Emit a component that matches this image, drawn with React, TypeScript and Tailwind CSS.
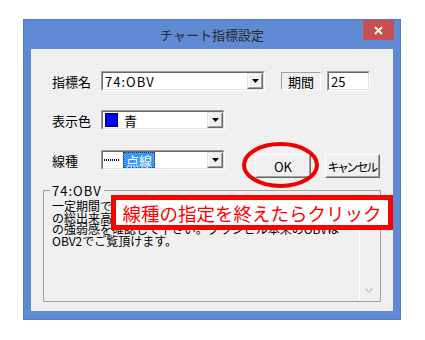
import React from 'react';

const jp = "font-['Noto_Sans_CJK_JP','Noto_Sans_CJK_SC',sans-serif]";

// classic sunken / raised edges
const sunkenOuter = 'border border-t-[#a0a0a0] border-l-[#a0a0a0] border-b-white border-r-white';
const sunkenInner = 'border border-t-[#696969] border-l-[#696969] border-b-[#e3e3e3] border-r-[#e3e3e3]';
const raisedOuter = 'border border-t-[#e3e3e3] border-l-[#e3e3e3] border-b-[#696969] border-r-[#696969]';
const raisedInner = 'border border-t-white border-l-white border-b-[#a0a0a0] border-r-[#a0a0a0]';

const DropArrow = () => (
  <div className={`w-[16px] h-full ${raisedOuter}`}>
    <div className={`w-full h-full ${raisedInner} bg-[#f0f0f0] flex items-center justify-center`}>
      <svg width="7" height="4" viewBox="0 0 7 4">
        <path d="M0 0h7L3.5 4z" fill="#000" />
      </svg>
    </div>
  </div>
);

const Combo: React.FC<{ className: string; children: React.ReactNode }> = ({ className, children }) => (
  <div className={`h-[20px] ${sunkenOuter} ${className}`}>
    <div className={`h-full ${sunkenInner} bg-white flex`}>
      <div className="flex-1 flex items-center min-w-0">{children}</div>
      <DropArrow />
    </div>
  </div>
);

const Button: React.FC<{ className: string; children: React.ReactNode }> = ({ className, children }) => (
  <div className={`h-[24px] border border-t-white border-l-white border-b-[#696969] border-r-[#696969] ${className}`}>
    <div className="w-full h-full border border-t-[#f0f0f0] border-l-[#f0f0f0] border-b-[#a0a0a0] border-r-[#a0a0a0] bg-[#f0f0f0] flex items-center justify-center text-[13px] leading-[13px] text-black">
      {children}
    </div>
  </div>
);

export default function App() {
  return (
    <div className={`relative w-[425px] h-[340px] bg-white pt-[19px] pl-[23px] ${jp}`}>
      {/* window */}
      <div className="w-[378px] h-[301px] bg-[#5f8ad4] border border-[#5479c2] flex flex-col">
        <div className="h-[29px] grid grid-cols-[1fr_auto_1fr]">
          <div />
          <div className="flex items-center text-[13px] text-[#2b2b2b] pt-[1px]">チャート指標設定</div>
          <div className="flex justify-end items-start pr-[6px]">
            <div className="w-[31px] h-[20px] bg-[#c75050] flex items-center justify-center">
              <svg width="9" height="9" viewBox="0 0 9 9">
                <path d="M1 1L8 8M8 1L1 8" stroke="#fff" strokeWidth="1.8" />
              </svg>
            </div>
          </div>
        </div>

        <div className="mx-[7px] h-[262px] bg-[#f0f0f0] px-[12px] pt-[22px] text-[13px] text-black">
          {/* row 1 */}
          <div className="flex items-center h-[20px] pl-[9px]">
            <div className="w-[49px] leading-[13px]">指標名</div>
            <Combo className="w-[164px]">
              <span className="pl-[2px] tracking-[1px] leading-[13px]">74:OBV</span>
            </Combo>
            <div className="ml-[16px] w-[40px] h-[18px] border border-t-[#a0a0a0] border-l-[#a0a0a0] border-b-white border-r-white flex items-center justify-center leading-[13px]">
              期間
            </div>
            <div className={`ml-[6px] w-[43px] h-[20px] ${sunkenOuter}`}>
              <div className={`w-full h-full ${sunkenInner} bg-white flex items-center pl-[2px] leading-[13px]`}>25</div>
            </div>
          </div>

          {/* row 2 */}
          <div className="flex items-center h-[20px] pl-[9px] mt-[19px]">
            <div className="w-[49px] leading-[13px]">表示色</div>
            <Combo className="w-[124px]">
              <div className="ml-[2px] w-[13px] h-[14px] bg-[#0000ff] border border-[#00004a]" />
              <span className="ml-[6px] leading-[13px]">青</span>
            </Combo>
          </div>

          {/* row 3 */}
          <div className="flex items-start pl-[9px] mt-[20px]">
            <div className="w-[49px] h-[20px] flex items-center leading-[13px]">線種</div>
            <Combo className="w-[124px]">
              <div className="ml-[1px] w-[15px] h-[2px] bg-[repeating-linear-gradient(90deg,#00005a_0_1px,transparent_1px_2px)]" />
              <span className="ml-[4px] h-[16px] px-[2px] bg-[#3399ff] text-white border border-dotted border-[#333] flex items-center leading-[13px]">
                点線
              </span>
            </Combo>
            <Button className="ml-[30px] mt-[4px] w-[56px]">OK</Button>
            <Button className="ml-[14px] mt-[4px] w-[55px]">
              <span className="text-[12px] tracking-[-1px] [font-feature-settings:'palt']">キャンセル</span>
            </Button>
          </div>

          {/* group box */}
          <fieldset className="mt-[6px] h-[118px] border border-[#a0a0a0]">
            <legend className="ml-[6px] px-[2px] leading-[13px] tracking-[1px]">74:OBV</legend>
            <div className="flex h-[100px] ml-[4px] mr-[3px] mt-[3px]">
              <div className="flex-1 pl-[4px] text-[12px] leading-[11.5px] text-black">
                <div>一定期間での上昇日の出来高と下落日の出来高</div>
                <div>の総出来高を比較し、売り買いのエネルギー</div>
                <div>の強弱感を確認して下さい。グランビル本来のOBVは</div>
                <div>OBV2でご覧頂けます。</div>
              </div>
              <div className="w-[18px] border-l border-white flex flex-col justify-end items-center pb-[7px]">
                <svg width="8" height="5" viewBox="0 0 8 5">
                  <path d="M0.5 0.5L4 4L7.5 0.5" stroke="#c4c4c4" strokeWidth="1.3" fill="none" />
                </svg>
              </div>
            </div>
          </fieldset>
        </div>
      </div>

      {/* red ellipse around OK */}
      <svg className="absolute left-[240px] top-[140px]" width="82" height="50" viewBox="0 0 82 50">
        <ellipse cx="40.5" cy="25" rx="36.5" ry="21" fill="none" stroke="#ee0000" strokeWidth="4" />
      </svg>

      {/* callout */}
      <div className="absolute left-[111px] top-[195px] w-[282px] h-[35px] bg-white border-[5px] border-[#ff0000] flex items-center justify-center text-[18.5px] leading-[20px] text-[#ff0000]">
        線種の指定を終えたらクリック
      </div>
    </div>
  );
}
